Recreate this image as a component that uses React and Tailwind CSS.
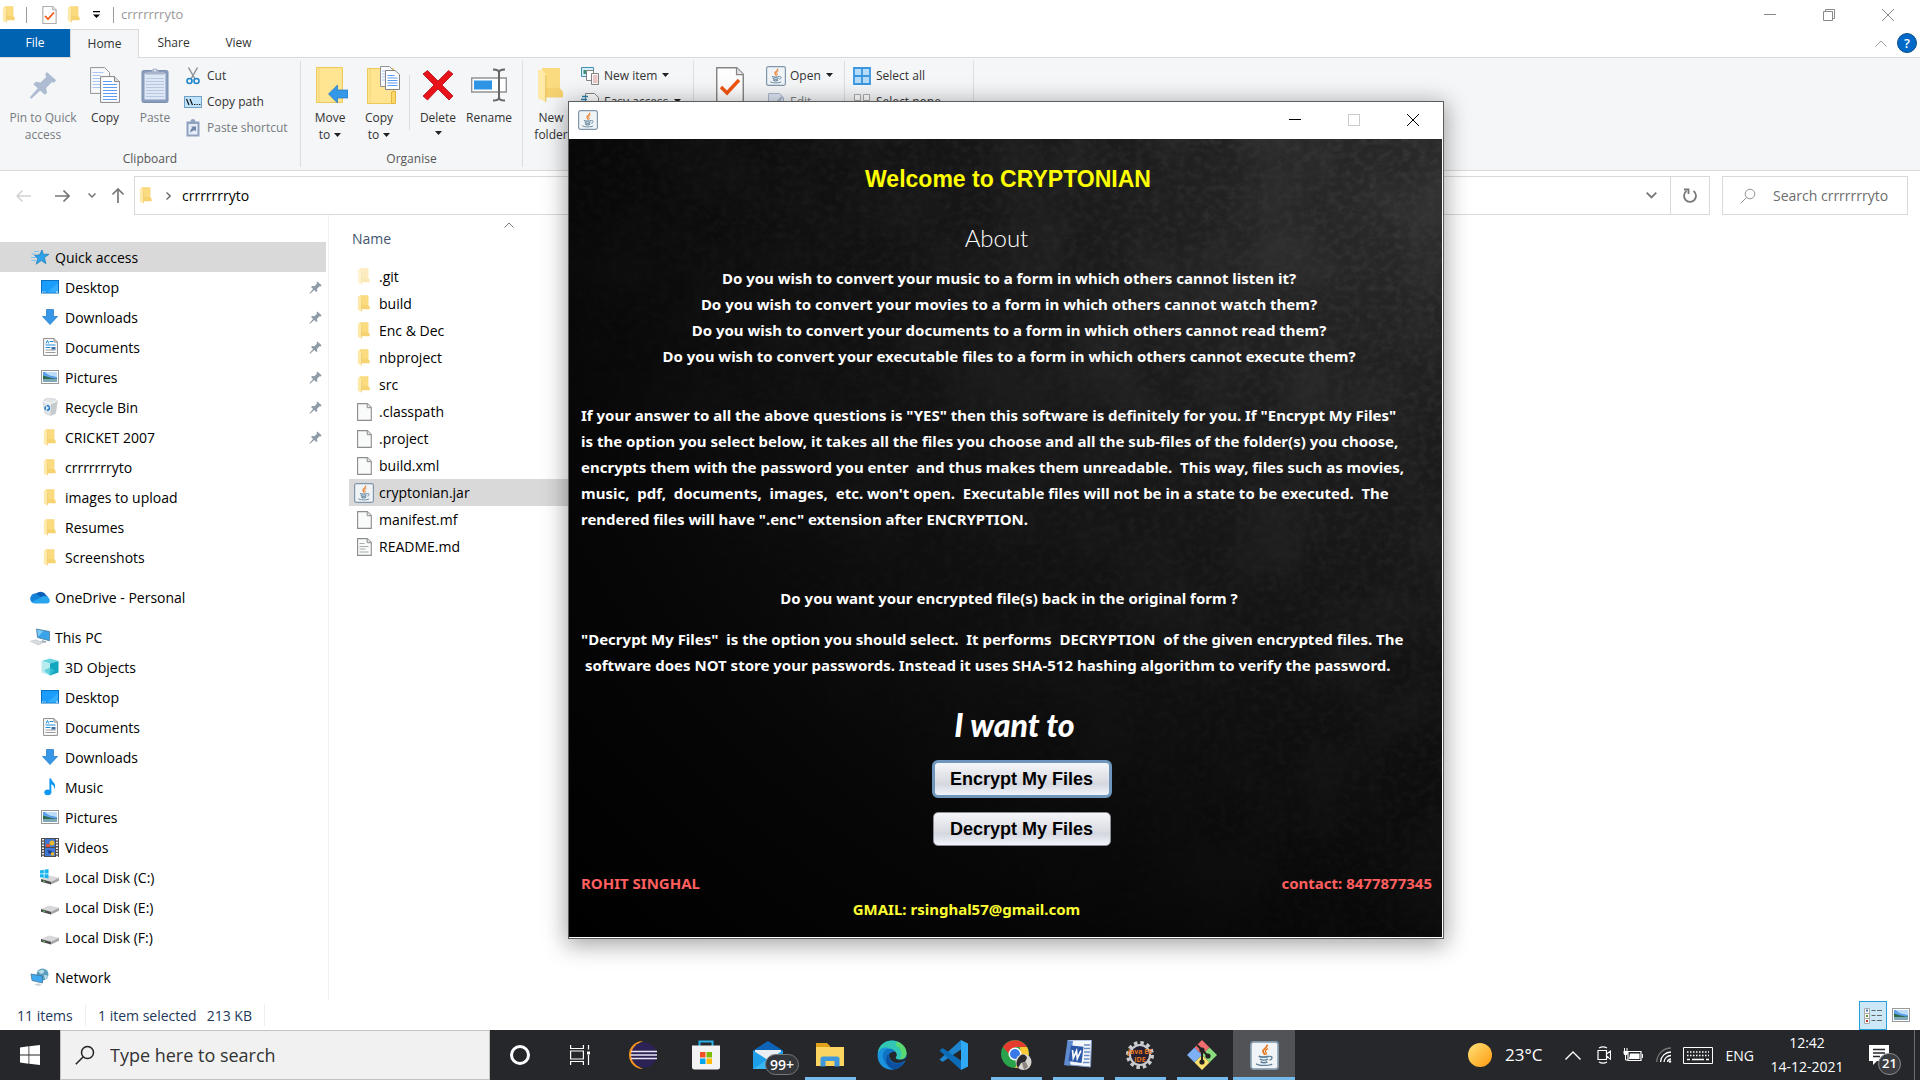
import React from "react";

/* ---------- small drawings ---------- */

function Folder({ className = "w-4 h-5", faded = false }) {
  return (
    <svg viewBox="0 0 14 18" className={className} opacity={faded ? 0.5 : 1} aria-hidden="true">
      <path d="M2.5 .5h9v10.3l1.5 1.4v3H2.5z" fill="#f6d271" />
      <path d="M2.5 .5h9v10h-9z" fill="#fadb80" />
      <path d="M.5 1.2l2.5.6 1.4 1.8V17.5L.5 15.6z" fill="#ffe9a8" />
      <path d="M4.4 4v13.5" stroke="#e9bf57" strokeWidth=".5" />
    </svg>
  );
}

function Java({ className = "w-5 h-5" }) {
  return (
    <svg viewBox="0 0 20 20" className={className} fill="none" aria-hidden="true">
      <rect x=".6" y=".6" width="18.8" height="18.8" rx="1.8" fill="#f1f4f7" stroke="#8097ab" strokeWidth="1.2" />
      <path d="M11.6 2.6c1.2 2-3.4 2.9-2.6 4.9.3.8 1.3 1 .9 2.2" stroke="#e9771e" strokeWidth="1.2" />
      <path d="M12.5 5.2c-1.9.8-2.4 1.7-1.4 2.8.4.6 0 1-.3 1.6" stroke="#e9771e" strokeWidth=".9" />
      <path d="M6 10.5c1.5.8 5.400.8 7 0M6.800 12.500c1.500.8 4.200.8 5.600 0M7.300 14.300c1.200.7 3.500.7 4.700 0" stroke="#5b7f99" strokeWidth="1.100" />
      <path d="M13.300 10.700c2.600-.7 2.400 2.100.1 2.500M4.300 15.600c1 1.600 9.300 1.700 11 .2" stroke="#5b7f99" strokeWidth=".9" />
    </svg>
  );
}

function Pin({ className = "w-3 h-3", color = "#8f9ba6" }) {
  return (
    <svg viewBox="0 0 16 16" className={className} aria-hidden="true">
      <path d="M10.200.5l5.300 4.800-1.200 1.400-1.300-.3-3.200 3.300.5 2.800-1.300 1.100-2.600-2.400-5 4.600-.9-.8 4.500-5.100-2.500-2.400 1.300-1.300 2.800.4 3.200-3.200-.5-1.500z" fill={color} />
    </svg>
  );
}

function Page({ className = "w-4 h-5", lines = false }) {
  return (
    <svg viewBox="0 0 15 18" className={className} aria-hidden="true">
      <path d="M.6.600h9.700l4 4v12.800H.6z" fill="#f9fafa" stroke="#8d8d8d" strokeWidth="1.100" />
      <path d="M10.200.6v4.100h4" fill="#e4e4e4" stroke="#8d8d8d" strokeWidth="1" />
      {lines && <path d="M2.500 5.500h5M2.500 8.500h9M2.500 11h6M2.500 14h9" stroke="#a7acac" />}
    </svg>
  );
}

function CheckPage({ className }) {
  return (
    <svg viewBox="0 0 28 36" className={className} aria-hidden="true">
      <path d="M.7.700h20l6.600 6.600v28H.7z" fill="#fdfdfd" stroke="#858585" strokeWidth="1.500" />
      <path d="M20.500.7v7h7" fill="#e3e3e3" stroke="#858585" strokeWidth="1.200" />
      <path d="M5 20l6 6 12-13" fill="none" stroke="#f0540f" strokeWidth="3.400" />
    </svg>
  );
}

function TextPages({ className }) {
  return (
    <svg viewBox="0 0 30 36" className={className} aria-hidden="true">
      <path d="M.6.600h14l5 5v20.800H.6z" fill="#f8f9fb" stroke="#929292" />
      <path d="M2.500 5.500h11M2.500 8.500h8M2.500 11.500h8M2.500 14.500h8M2.500 17.500h8M2.500 20.500h8" stroke="#a9c6f2" />
      <path d="M10.600 9.600h14l5 5v20.800h-19z" fill="#fdfdfe" stroke="#868686" />
      <path d="M24.500 9.600v5h5" fill="#ddd" stroke="#868686" />
      <path d="M13 14.500h9M13 17.500h14M13 20.500h14M13 23.500h14M13 26.500h14M13 29.500h14M13 32.500h14" stroke="#5e9bf2" />
    </svg>
  );
}

function Clip({ className }) {
  return (
    <svg viewBox="0 0 28 36" className={className} aria-hidden="true">
      <rect x="1" y="3.500" width="26" height="32" rx="1.500" fill="#8a9dbd" stroke="#7b8fb2" />
      <path d="M3.500 6.500h21v26h-21z" fill="#dde7f5" />
      <path d="M5 11.500h18M5 14.500h18M5 17.500h18M5 20.500h18M5 23.500h18M5 26.500h18M5 29.500h18" stroke="#b9c8e0" />
      <path d="M5 7.500V5h5.500a3.500 3.500 0 017 0H23v2.500z" fill="#a8b5ca" />
      <circle cx="14" cy="3.500" r="1" fill="#eef2f8" />
    </svg>
  );
}

function Desktop() {
  return (
    <svg viewBox="0 0 18 14" className="h-[14px] w-[18px]" aria-hidden="true">
      <rect x=".5" y=".5" width="17" height="12.500" fill="#1a9dfc" stroke="#0b70bd" />
      <path d="M6 12.500L17 3v9.500z" fill="#35adff" />
      <path d="M1 12h1.500M3.500 12h1M15 12h2" stroke="#fff" strokeWidth=".9" />
    </svg>
  );
}

function Down() {
  return (
    <svg viewBox="0 0 16 16" className="h-4 w-4" aria-hidden="true">
      <path d="M4.500.5h7v7h4L8 15.500.5 7.500h4z" fill="#3896e6" stroke="#2a7fc9" strokeWidth=".8" />
    </svg>
  );
}

function Docs() {
  return (
    <svg viewBox="0 0 15 18" className="h-[18px] w-[15px]" aria-hidden="true">
      <path d="M.6.600h10.400l3.400 3.400v13.400H.6z" fill="#fff" stroke="#8a8a8a" />
      <path d="M11 .6v3.400h3.400" fill="none" stroke="#8a8a8a" />
      <path d="M3 5.500l1.500-3 1.200 3M6.500 3.500H10M2.500 7h10M2.500 9.500h5" stroke="#1e8fd8" fill="none" />
      <path d="M2.500 12h10M2.500 14.500h10" stroke="#999" />
      <path d="M8.500 9h4v2.500h-4z" fill="#3f6fa5" />
    </svg>
  );
}

function Picture() {
  return (
    <svg viewBox="0 0 18 14" className="h-[14px] w-[18px]" aria-hidden="true">
      <rect x=".5" y=".5" width="17" height="13" fill="#fff" stroke="#999" />
      <path d="M2 2h14v10H2z" fill="#5ea2ee" />
      <path d="M4 2h12v5c-4-1-9-1-12-5z" fill="#bcdcf8" />
      <path d="M2 5.500c5 1 8 3 14 3V9H2z" fill="#2f6c4d" />
      <path d="M2 9h14v3H2z" fill="#7fa9b8" />
    </svg>
  );
}

function Bin() {
  return (
    <svg viewBox="0 0 16 18" className="h-[18px] w-4" aria-hidden="true">
      <path d="M1 3.500l2-2.500 4-.8 5 .6 3.500 2L13.500 15.500 8.500 17.500 3 15.200z" fill="#e3e6e8" stroke="#bfc5c9" strokeWidth=".6" />
      <path d="M9 5.500l6.300-2.400-1.800 12.400-5 2z" fill="#c5cacd" />
      <path d="M1 3.500L9 5.500l6.400-2.500" fill="none" stroke="#fff" strokeWidth=".8" />
      <circle cx="5.200" cy="10" r="2.200" fill="none" stroke="#1878cf" strokeWidth="1.500" strokeDasharray="3.400 1" />
    </svg>
  );
}

function Star() {
  return (
    <svg viewBox="0 0 20 18" className="h-[18px] w-5" aria-hidden="true">
      <path d="M12 2l1.200 4.200 5.800.1-4.600 3.300 1.500 6-4.700-3-5 3.600 1.600-5.800L4.500 7.400l5-.6z" fill="#2ea3ea" stroke="#1678b8" strokeWidth=".7" />
      <path d="M4 3.500h5M1.500 6h4M1 9.500h5M1.500 12.500h4.500" stroke="#7ec2ee" />
    </svg>
  );
}

function Cloud() {
  return (
    <svg viewBox="0 0 20 14" className="h-[14px] w-5" aria-hidden="true">
      <path d="M6 3.500A6 5 0 0116 5a4.500 4.500 0 01-1 8H5A4.500 4.500 0 016 3.500z" fill="#0c5fb8" />
      <path d="M.3 9.300A4.700 4.700 0 016 4l5 3-5 6H4.500A4.200 4.200 0 01.3 9.300z" fill="#1483d8" />
      <path d="M2 12L12 6.800a5 5 0 017.800 3.400A3.300 3.300 0 0116.500 13.500H4.500A4 4 0 012 12z" fill="#28a5ee" />
    </svg>
  );
}

function ThisPc() {
  return (
    <svg viewBox="0 0 20 18" className="h-[18px] w-5" aria-hidden="true">
      <path d="M6.500 1L19.500 3.500v9.300L7.500 9.500z" fill="#3aa3ea" stroke="#47728f" strokeWidth=".7" />
      <path d="M7.200 1.800l6 1.200-5 5.500z" fill="#7fcbf8" />
      <path d="M12 12.500l4 1.500M10 14h6" stroke="#8b9aa5" />
      <path d="M.5 13.200l5.500-1.400 7 3-5 2.200z" fill="#d8dde0" stroke="#b4bbc0" strokeWidth=".5" />
    </svg>
  );
}

function Cube() {
  return (
    <svg viewBox="0 0 18 18" className="h-[18px] w-[18px]" aria-hidden="true">
      <path d="M9 .5L17.500 3 9 5.500.5 3z" fill="#66d5df" />
      <path d="M.5 3L9 5.500v12L.5 14.500z" fill="#b7ebef" />
      <path d="M17.500 3L9 5.500v12l8.500-3z" fill="#12a6bf" />
      <path d="M3 12.500l6-3 5 3-5 5z" fill="#3cc4d3" opacity=".7" />
    </svg>
  );
}

function Music() {
  return (
    <svg viewBox="0 0 12 18" className="h-[18px] w-3" aria-hidden="true">
      <ellipse cx="3.800" cy="14.300" rx="3.500" ry="2.900" fill="#0e97f4" />
      <path d="M5.400.5h1.900c.3 3.500 4 4 3.800 7.500 0 1.500-.6 2.600-1.300 3.400.7-2.800-.4-4.400-2.500-5.100v8H5.400z" fill="#0e97f4" />
    </svg>
  );
}

function Videos() {
  return (
    <svg viewBox="0 0 18 19" className="h-[19px] w-[18px]" aria-hidden="true">
      <path d="M0 0h18v19H0z" fill="#4d4d4d" />
      <path d="M2 1v18M16 1v18" stroke="#eee" strokeWidth="2" strokeDasharray="1.500 1.300" />
      <path d="M4 1h10v8H4zM4 10h10v8H4z" fill="#4176d9" />
      <circle cx="11" cy="5" r="2.500" fill="#e9bb2b" />
      <path d="M5 6h4v3H5z" fill="#d9563d" />
      <path d="M6 12l5 1v3H8z" fill="#1f3f86" />
      <circle cx="11.500" cy="16" r="1.800" fill="#e9bb2b" />
    </svg>
  );
}

function Disk({ win = false }) {
  return (
    <svg viewBox="0 0 20 16" className="h-4 w-5" aria-hidden="true">
      <path d="M1 10l8-3.500 10 2.300-8 4z" fill="#d8d8da" />
      <path d="M1 10l10 2.800v2.700L1 12.700z" fill="#4b4b4b" />
      <path d="M19 8.800l-8 4v2.700l8-3.700z" fill="#a5a5a8" />
      <path d="M3 12l2 .6" stroke="#5dcb5d" />
      {win && <path d="M0 1.500l3.800-.7v3.700H0zM4.500.7L8.500 0v4.500h-4zM0 5.200h3.800v3.600L0 8.200zM4.500 5.200h4v4.200l-4-.6z" fill="#16b4ee" />}
    </svg>
  );
}

function Network() {
  return (
    <svg viewBox="0 0 20 18" className="h-[18px] w-5" aria-hidden="true">
      <circle cx="12.500" cy="6.500" r="6" fill="#5a9fc0" />
      <path d="M8 3.500c2-1.500 5-2.500 6-1s-1 3-3 3.500zM14 7c2 0 4 .5 4 1.500L15 12z" fill="#b6dbe6" />
      <path d="M1 6l11.500 2v7L2 12.500z" fill="#3fa8ee" stroke="#3c6d8e" strokeWidth=".7" />
      <path d="M4 16l5-.5 3 1.500-4 1z" fill="#c9d2d8" />
    </svg>
  );
}

const Caret = ({ className = "h-1 w-[7px]" }) => (
  <svg viewBox="0 0 7 4" className={className} aria-hidden="true"><path d="M0 0h7L3.500 4z" fill="#222" /></svg>
);

const Glass = ({ className, color, width = 1 }) => (
  <svg viewBox="0 0 20 20" className={className} fill="none" stroke={color} strokeWidth={width} aria-hidden="true">
    <circle cx="12.500" cy="7.500" r="6" /><path d="M8.300 11.800L.8 19.200" />
  </svg>
);

const Cross = ({ className, color }) => (
  <svg viewBox="0 0 12 12" className={className} stroke={color} aria-hidden="true"><path d="M0 0l12 12M12 0L0 12" /></svg>
);

/* ---------- explorer ---------- */

function BigButton({ icon, lines, width, muted, caret, below }) {
  return (
    <button className={`flex shrink-0 flex-col items-center ${width} ${muted ? "text-[#777b80]" : "text-[#333]"}`}>
      <span className="mb-[5px] flex h-[38px] items-center justify-center">{icon}</span>
      {lines.map((t, i) => (
        <span key={t} className="flex items-center gap-1 whitespace-nowrap leading-[17px]">
          {t}
          {caret && i === lines.length - 1 && <Caret />}
        </span>
      ))}
      {below && <span className="flex h-[14px] items-center"><Caret /></span>}
    </button>
  );
}

function SmallButton({ icon, label, muted, caret }) {
  return (
    <button className={`flex h-[26px] items-center gap-1 whitespace-nowrap ${muted ? "text-[#777b80]" : "text-[#333]"}`}>
      <span className="flex w-5 items-center justify-center">{icon}</span>
      {label}
      {caret && <span className="mb-[2px] ml-px"><Caret /></span>}
    </button>
  );
}

function Group({ width, label, children }) {
  return (
    <section className={`my-[3px] flex shrink-0 flex-col border-r border-[#dcdde0] ${width}`}>
      <div className="flex h-[92px] items-start">{children}</div>
      <div className="text-center leading-[16px] text-[#555]">{label}</div>
    </section>
  );
}

function Ribbon() {
  return (
    <div className="flex h-[114px] shrink-0 overflow-hidden border-y border-[#d9dadb] bg-[#f4f6f8] text-[12px]">
      <Group width="w-[301px]" label="Clipboard">
        <div className="flex pt-[5px] pl-1">
          <BigButton width="w-[78px]" muted lines={["Pin to Quick", "access"]} icon={<Pin className="h-7 w-7" color="#aebcd2" />} />
          <BigButton width="w-[46px]" lines={["Copy"]} icon={<TextPages className="h-9 w-[30px]" />} />
          <BigButton width="w-[54px]" muted lines={["Paste"]} icon={<Clip className="h-9 w-7" />} />
        </div>
        <div className="pt-[2px] pl-px">
          <SmallButton
            label="Cut"
            icon={
              <svg viewBox="0 0 14 18" className="h-[18px] w-[14px]" fill="none" aria-hidden="true">
                <path d="M2.500.5L9 12M11.500.5L5 12" stroke="#8d9499" strokeWidth="1.500" />
                <circle cx="3.500" cy="14" r="2.500" stroke="#1f86c9" strokeWidth="1.600" /><circle cx="10.500" cy="14" r="2.500" stroke="#1f86c9" strokeWidth="1.600" />
              </svg>
            }
          />
          <SmallButton
            label="Copy path"
            icon={
              <svg viewBox="0 0 18 12" className="h-3 w-[18px]" aria-hidden="true">
                <rect x=".5" y=".5" width="17" height="11" fill="#bfe3fb" stroke="#6f9fc2" />
                <path d="M2.500 3l2.500 6M6 3l2.500 6M10 8.500h1.300M12.500 8.500h1.300M15 8.500h1.300" stroke="#111" strokeWidth="1.200" />
              </svg>
            }
          />
          <SmallButton
            muted
            label="Paste shortcut"
            icon={
              <svg viewBox="0 0 14 18" className="h-[18px] w-[14px]" aria-hidden="true">
                <path d="M.5 2.500h4a2.500 2.500 0 015 0h4v15H.5z" fill="#8fa1bf" />
                <path d="M2.500 5h9v10.500h-9z" fill="#e6edf7" />
                <path d="M4 13.500l1-3.500 1.500-1L5 7.500h5v5L8.500 11z" fill="#6e84a8" />
              </svg>
            }
          />
        </div>
      </Group>
      <Group width="w-[222px]" label="Organise">
        <div className="flex pt-[5px] pl-[6px]">
          <BigButton width="w-[46px]" caret lines={["Move", "to"]} icon={
            <svg viewBox="0 0 32 36" className="ml-1 h-9 w-8" aria-hidden="true">
              <path d="M.5.5h26v35H.5z" fill="#ffe491" stroke="#ecc95a" /><path d="M3 1v34" stroke="#f3d676" />
              <path d="M12.500 27l9-9v5H32v8H21.500v5z" fill="#3497e8" stroke="#2479c4" strokeWidth=".7" />
            </svg>
          } />
          <BigButton width="w-[52px]" caret lines={["Copy", "to"]} icon={
            <svg viewBox="0 0 33 38" className="ml-2 h-[38px] w-[33px]" aria-hidden="true">
              <path d="M.5 2.500h26v35H.5z" fill="#ffe491" stroke="#ecc95a" /><path d="M3 3v34" stroke="#f3d676" />
              <path d="M24.500 37.500V26l4-1v12.500z" fill="#ffd968" stroke="#e3b640" />
              <path d="M13.500.5h9l3 3v17h-12z" fill="#f8fafc" stroke="#929292" /><path d="M15 5h4M15 8h4M15 11h4M15 14h4" stroke="#a9c6f2" />
              <path d="M18.500 4.500h9.500l4.500 4v15h-14z" fill="#fff" stroke="#858585" />
              <path d="M20.500 9.500h7M20.500 12h10M20.500 14.500h10M20.500 17h10M20.500 19.500h10" stroke="#5e9bf2" />
            </svg>
          } />
          <div className="mt-[9px] mr-[3px] ml-1 h-[55px] w-px bg-[#dcdde0]" />
          <BigButton width="w-[50px]" below lines={["Delete"]} icon={
            <svg viewBox="0 0 32 32" className="h-8 w-8" aria-hidden="true">
              <path d="M1 5l4.500-3.500L16 12 26.500 1.500 31 5 20 16l11 11-4 4L16 20 5.500 31 1 27l11-11z" fill="#e8121b" stroke="#b10c14" strokeWidth=".8" />
            </svg>
          } />
          <BigButton width="w-[52px]" lines={["Rename"]} icon={
            <svg viewBox="0 0 36 34" className="h-[34px] w-9" fill="none" aria-hidden="true">
              <path d="M.7 10h34.600v14H.7z" fill="#fff" stroke="#929292" strokeWidth="1.400" />
              <path d="M3 12.500h18v9H3z" fill="#2e94e6" />
              <path d="M22 1.500c4 0 6 .5 6 3v25c0 2.500-2 3-6 3M34 1.500c-4 0-6 .5-6 3v25c0 2.500 2 3 6 3" stroke="#666" strokeWidth="2" />
            </svg>
          } />
        </div>
      </Group>
      <Group width="w-[171px]" label="New">
        <div className="flex pt-[5px] pl-1">
          <BigButton width="w-[48px]" lines={["New", "folder"]} icon={<Folder className="h-9 w-7" />} />
        </div>
        <div className="pt-[2px] pl-[5px]">
          <SmallButton caret label="New item" icon={
            <svg viewBox="0 0 18 18" className="h-[18px] w-[18px]" aria-hidden="true">
              <path d="M.5.5h12v9H.5z" fill="#d7eefa" stroke="#3f8fae" /><path d="M2.500 3h3v4h-3z" fill="#3f8f7a" />
              <path d="M5.500 3.500h7v10h-7z" fill="#fff" stroke="#858585" /><path d="M10.500 6.500h7v11h-7z" fill="#f7f7f7" stroke="#858585" />
              <path d="M12 9h4.500M12 11h4.500M12 13h4.500M12 15h4.500" stroke="#d99" />
            </svg>
          } />
          <SmallButton caret label="Easy access" icon={
            <svg viewBox="0 0 18 18" className="h-[18px] w-[18px]" aria-hidden="true">
              <path d="M4.500.5h9l4 4v13h-13z" fill="#fff" stroke="#858585" /><path d="M1 3.500h6M0 6.500h6M0 9.500h5" stroke="#2a7fb5" strokeWidth="1.400" />
            </svg>
          } />
        </div>
      </Group>
      <Group width="w-[151px]" label="Open">
        <div className="flex pt-[5px] pl-[11px]">
          <BigButton width="w-[50px]" lines={["Properties"]} icon={<CheckPage className="h-9 w-7" />} />
        </div>
        <div className="pt-[2px] pl-[11px]">
          <SmallButton caret label="Open" icon={<Java />} />
          <SmallButton muted label="Edit" icon={
            <svg viewBox="0 0 16 18" className="h-[18px] w-4" aria-hidden="true">
              <path d="M.5.500h11l4 4v13H.5z" fill="#dfe6f2" stroke="#a9b7cf" /><path d="M6 13l8-9" stroke="#a9b7cf" strokeWidth="2.500" />
            </svg>
          } />
        </div>
      </Group>
      <Group width="w-[129px]" label="Select">
        <div className="pt-[2px] pl-[7px]">
          <SmallButton label="Select all" icon={
            <svg viewBox="0 0 18 18" className="h-[18px] w-[18px]" aria-hidden="true">
              <path d="M1 1h16v16H1zM9 1v16M1 9h16" fill="#b5dcfb" stroke="#3a96df" strokeWidth="1.800" />
            </svg>
          } />
          <SmallButton label="Select none" icon={
            <svg viewBox="0 0 18 18" className="h-[18px] w-[18px]" aria-hidden="true">
              <path d="M1.500 1.500h6v6h-6zM10.500 1.500h6v6h-6zM1.500 10.500h6v6h-6zM10.500 10.500h6v6h-6z" fill="#fff" stroke="#aaa" />
            </svg>
          } />
        </div>
      </Group>
    </div>
  );
}

function ExplorerTop() {
  return (
    <header className="shrink-0">
      <div className="flex h-[29px] items-center">
        <div className="flex flex-1 items-center pl-[2px]">
          <Folder className="h-[17px] w-[14px]" />
          <span className="ml-[10px] h-4 w-px bg-[#9a9a9a]" />
          <CheckPage className="ml-[15px] h-[18px] w-[15px]" />
          <Folder className="ml-[10px] h-[17px] w-[14px]" />
          <svg viewBox="0 0 7 7" className="ml-3 h-[7px] w-[7px]" aria-hidden="true"><path d="M0 0h7v1.300H0zM0 3.500h7L3.500 7z" /></svg>
          <span className="ml-[13px] h-4 w-px bg-[#9a9a9a]" />
          <span className="ml-[7px] text-[13px] text-[#999]">crrrrrrryto</span>
        </div>
        <div className="flex items-center gap-[47px] pr-[26px]">
          <button aria-label="Minimise" className="h-px w-3 bg-[#888]" />
          <button aria-label="Restore">
            <svg viewBox="0 0 12 12" className="h-3 w-3" fill="none" stroke="#888" aria-hidden="true"><path d="M.5 2.500h9v9h-9zM2.500 2.500v-2h9v9h-2" /></svg>
          </button>
          <button aria-label="Close"><Cross className="h-3 w-3" color="#888" /></button>
        </div>
      </div>
      <nav className="flex h-7 items-center text-[12px] text-[#333]">
        <button className="h-7 w-[70px] bg-[#0063b1] text-white">File</button>
        <button className="relative z-10 h-[29px] w-[69px] self-start border border-b-0 border-[#d9dadb] bg-[#f4f6f8]">Home</button>
        <button className="w-[69px]">Share</button>
        <button className="w-[61px]">View</button>
        <span className="flex-1" />
        <button aria-label="Collapse ribbon" className="mr-[10px]">
          <svg viewBox="0 0 12 7" className="h-[7px] w-3" fill="none" stroke="#999" aria-hidden="true"><path d="M.5 6.500L6 1l5.500 5.500" /></svg>
        </button>
        <button aria-label="Help" className="mr-[3px] h-5 w-5 rounded-full border border-[#0b4f86] bg-[#0269c8] text-[13px] leading-4 font-semibold text-white">?</button>
      </nav>
    </header>
  );
}

function AddressRow() {
  return (
    <div className="flex shrink-0 items-center pt-[5px] pr-3">
      <div className="flex w-[134px] items-center pl-4">
        <button aria-label="Back">
          <svg viewBox="0 0 15 12" className="h-3 w-[15px]" fill="none" stroke="#d2d2d2" strokeWidth="1.500" aria-hidden="true"><path d="M15 6H1M6.500.5L1 6l5.500 5.500" /></svg>
        </button>
        <button aria-label="Forward" className="ml-6">
          <svg viewBox="0 0 15 12" className="h-3 w-[15px]" fill="none" stroke="#777" strokeWidth="1.700" aria-hidden="true"><path d="M0 6h14M8.500.5L14 6l-5.500 5.500" /></svg>
        </button>
        <button aria-label="Recent locations" className="ml-[18px]">
          <svg viewBox="0 0 8 5" className="h-[5px] w-2" fill="none" stroke="#777" strokeWidth="1.500" aria-hidden="true"><path d="M.5.5L4 4 7.500.5" /></svg>
        </button>
        <button aria-label="Up" className="ml-4">
          <svg viewBox="0 0 12 15" className="h-[15px] w-3" fill="none" stroke="#777" strokeWidth="1.700" aria-hidden="true"><path d="M6 15V1M.5 6.500L6 1l5.500 5.500" /></svg>
        </button>
      </div>
      <div className="flex h-[39px] flex-1 items-center border border-[#d9d9d9] bg-white pl-1">
        <Folder className="h-[17px] w-[14px]" />
        <svg viewBox="0 0 5 8" className="ml-[13px] h-2 w-[5px]" fill="none" stroke="#666" strokeWidth="1.300" aria-hidden="true"><path d="M.5.5L4.200 4 .5 7.500" /></svg>
        <button className="ml-[11px] text-[14px]">crrrrrrryto</button>
        <span className="flex-1" />
        <button aria-label="Previous locations" className="mr-[13px]">
          <svg viewBox="0 0 11 7" className="h-[7px] w-[11px]" fill="none" stroke="#777" strokeWidth="1.800" aria-hidden="true"><path d="M.7.700L5.500 5.500 10.300.7" /></svg>
        </button>
        <button aria-label="Refresh" className="flex h-full w-[39px] items-center justify-center border-l border-[#d9d9d9]">
          <svg viewBox="0 0 16 16" className="h-4 w-4" fill="none" stroke="#777" strokeWidth="1.800" aria-hidden="true"><path d="M11.500 3a6 6 0 11-7 0" /><path d="M2 1.500h4.500V6" /></svg>
        </button>
      </div>
      <label className="ml-3 flex h-[39px] w-[186px] items-center border border-[#d9d9d9] pl-[17px]">
        <Glass className="h-4 w-4" color="#777" />
        <input aria-label="Search folder" placeholder="Search crrrrrrryto" className="ml-[17px] w-[125px] bg-transparent text-[14px] outline-none placeholder:text-[#6d6d6d]" />
      </label>
    </div>
  );
}

const folderIcon = <Folder className="h-[17px] w-[14px]" />;
const TREE = [
  ["Quick access", <Star />, 1, false],
  ["Desktop", <Desktop />, 2, true],
  ["Downloads", <Down />, 2, true],
  ["Documents", <Docs />, 2, true],
  ["Pictures", <Picture />, 2, true],
  ["Recycle Bin", <Bin />, 2, true],
  ["CRICKET 2007", folderIcon, 2, true],
  ["crrrrrrryto", folderIcon, 2, false],
  ["images to upload", folderIcon, 2, false],
  ["Resumes", folderIcon, 2, false],
  ["Screenshots", folderIcon, 2, false],
  ["OneDrive - Personal", <Cloud />, 1, false],
  ["This PC", <ThisPc />, 1, false],
  ["3D Objects", <Cube />, 2, false],
  ["Desktop", <Desktop />, 2, false],
  ["Documents", <Docs />, 2, false],
  ["Downloads", <Down />, 2, false],
  ["Music", <Music />, 2, false],
  ["Pictures", <Picture />, 2, false],
  ["Videos", <Videos />, 2, false],
  ["Local Disk (C:)", <Disk win />, 2, false],
  ["Local Disk (E:)", <Disk />, 2, false],
  ["Local Disk (F:)", <Disk />, 2, false],
  ["Network", <Network />, 1, false],
];

function Sidebar() {
  return (
    <nav className="w-[329px] shrink-0 border-r border-[#f0f0f0] pt-[27px] pr-[2px] text-[14px]">
      <ul>
        {TREE.map(([label, icon, level, pinned], i) => (
          <li key={i} className={level === 1 && i > 0 ? "mt-[10px]" : ""}>
            <button
              className={`flex h-[30px] w-full items-center gap-[5px] pr-1 ${level === 1 ? "pl-[30px]" : "pl-10"} ${i === 0 ? "bg-[#d9d9d9]" : ""}`}
            >
              <span className="flex w-5 shrink-0 items-center justify-center">{icon}</span>
              <span className="flex-1 text-left">{label}</span>
              {pinned && <Pin className="h-[13px] w-[13px]" />}
            </button>
          </li>
        ))}
      </ul>
    </nav>
  );
}

const page = <Page className="h-[18px] w-[15px]" />;
const FILES = [
  [".git", <Folder className="h-[17px] w-[14px]" faded />],
  ["build", folderIcon],
  ["Enc & Dec", folderIcon],
  ["nbproject", folderIcon],
  ["src", folderIcon],
  [".classpath", page],
  [".project", page],
  ["build.xml", page],
  ["cryptonian.jar", <Java />],
  ["manifest.mf", page],
  ["README.md", <Page className="h-[18px] w-[15px]" lines />],
];

function FileList() {
  return (
    <main className="flex-1 pt-[7px] pl-5">
      <table className="w-[316px] border-collapse text-[14px]">
        <thead>
          <tr>
            <th className="pb-[13px] pl-[3px] text-left font-normal text-[#44546f]">
              <svg viewBox="0 0 10 6" className="mx-auto h-[6px] w-[10px]" fill="none" stroke="#777" aria-hidden="true"><path d="M.5 5.500L5 1l4.500 4.500" /></svg>
              <span className="block leading-[22px]">Name</span>
            </th>
          </tr>
        </thead>
        <tbody>
          {FILES.map(([name, icon]) => (
            <tr key={name} className={name === "cryptonian.jar" ? "bg-[#d9d9d9]" : ""}>
              <td className="h-[27px] p-0 pl-[5px]">
                <span className="flex items-center gap-[5px]">
                  <span className="flex w-5 items-center justify-center">{icon}</span>
                  {name}
                </span>
              </td>
            </tr>
          ))}
        </tbody>
      </table>
    </main>
  );
}

function StatusBar() {
  return (
    <footer className="flex h-[30px] shrink-0 items-center pr-[10px] text-[14px] text-[#1e395b]">
      <span className="w-[67px] pl-[17px] whitespace-nowrap">11 items</span>
      <span className="ml-[18px] h-[22px] w-px bg-[#eee]" />
      <span className="ml-3 whitespace-nowrap">1 item selected</span>
      <span className="ml-[10px] whitespace-nowrap">213 KB</span>
      <span className="ml-3 h-[22px] w-px bg-[#eee]" />
      <span className="flex-1" />
      <button aria-label="Details view" className="flex h-[29px] w-7 items-center justify-center self-end border border-[#26a0da] bg-[#cce8f6]">
        <svg viewBox="0 0 18 16" className="h-4 w-[18px]" fill="none" aria-hidden="true">
          <path d="M.5.5h5v15h-5zM.5 5.500h5M.5 10.500h5" fill="#fff" stroke="#aaa" />
          <path d="M2 2.500h2" stroke="#3a77c2" strokeWidth="2" /><path d="M2 8h2" stroke="#6a8f33" strokeWidth="2" /><path d="M2 13h2" stroke="#c23a2b" strokeWidth="2" />
          <path d="M7.500 2.500h4M13 2.500h5M7.500 7.500h4M13 7.500h5M7.500 12.500h4M13 12.500h5" stroke="#666" />
        </svg>
      </button>
      <button aria-label="Thumbnail view" className="ml-[5px]"><Picture /></button>
    </footer>
  );
}

/* ---------- java dialog ---------- */

function Dialog() {
  return (
    <section
      role="dialog"
      aria-label="Cryptonian"
      className="absolute top-[101px] left-[568px] z-20 w-[876px] border border-[#5c5c5c] bg-white pr-px pb-px shadow-[0_4px_22px_2px_rgba(0,0,0,0.36)]"
    >
      <div className="flex h-[37px] items-center pr-[23px] pb-[2px] pl-[9px]">
        <Java className="h-5 w-5" />
        <span className="flex-1" />
        <div className="flex items-center gap-[47px]">
          <button aria-label="Minimise dialog" className="h-px w-3 bg-black" />
          <button aria-label="Maximise dialog" className="h-3 w-3 border border-[#ccc]" />
          <button aria-label="Close dialog"><Cross className="h-3 w-3" color="#000" /></button>
        </div>
      </div>
      <div className="relative overflow-hidden bg-[radial-gradient(ellipse_at_94%_8%,#2a2a2a_0%,#1c1c1c_24%,#101010_50%,#060606_75%,#000000_100%)] font-['Noto_Sans',sans-serif] text-[15px] leading-[26px] font-bold text-white">
        <svg className="absolute inset-0 h-full w-full opacity-15 [mask-image:linear-gradient(to_top_right,transparent_25%,black)]" aria-hidden="true">
          <filter id="grain"><feTurbulence type="fractalNoise" baseFrequency="0.12 0.15" numOctaves="4" seed="4" /><feColorMatrix values="0 0 0 0 .45  0 0 0 0 .45  0 0 0 0 .45  1.600 0 0 0 -.65" /></filter>
          <filter id="clouds"><feTurbulence type="fractalNoise" baseFrequency="0.012 0.01" numOctaves="4" seed="9" /><feColorMatrix values="0 0 0 0 .45  0 0 0 0 .45  0 0 0 0 .45  1.600 0 0 0 -.65" /></filter>
          <rect width="100%" height="100%" filter="url(#grain)" />
          <rect width="100%" height="100%" filter="url(#clouds)" />
        </svg>
        <div className="relative pt-[27px] pr-[10px] pb-[15px] pl-3">
          <h1 className="pl-[3px] text-center font-['Liberation_Sans',Arial,sans-serif] text-[23px] text-[#ffff00]">Welcome to CRYPTONIAN</h1>
          <h2 className="mt-8 pr-5 text-center font-[Lato,sans-serif] text-[24px] leading-7 font-light">About</h2>
          <div className="mt-[13px] pl-[5px] text-center whitespace-nowrap">
            <p>Do you wish to convert your music to a form in which others cannot listen it?</p>
            <p>Do you wish to convert your movies to a form in which others cannot watch them?</p>
            <p>Do you wish to convert your documents to a form in which others cannot read them?</p>
            <p>Do you wish to convert your executable files to a form in which others cannot execute them?</p>
          </div>
          <p className="mt-[33px] whitespace-pre">
            {`If your answer to all the above questions is "YES" then this software is definitely for you. If "Encrypt My Files"
is the option you select below, it takes all the files you choose and all the sub-files of the folder(s) you choose,
encrypts them with the password you enter  and thus makes them unreadable.  This way, files such as movies,
music,  pdf,  documents,  images,  etc. won't open.  Executable files will not be in a state to be executed.  The
rendered files will have ".enc" extension after ENCRYPTION.`}
          </p>
          <p className="mt-[53px] pl-[5px] text-center">Do you want your encrypted file(s) back in the original form ?</p>
          <p className="mt-[15px] whitespace-pre">
            {`"Decrypt My Files"  is the option you should select.  It performs  DECRYPTION  of the given encrypted files. The
 software does NOT store your passwords. Instead it uses SHA-512 hashing algorithm to verify the password.`}
          </p>
          <h2 className="mt-[31px] pl-4 text-center font-[Lato,sans-serif] text-[32px] leading-8 font-black italic">I want to</h2>
          <div className="mt-[19px] flex flex-col items-center gap-[14px] pl-[30px] font-['Liberation_Sans',Arial,sans-serif] text-[18px] text-black">
            <button className="h-[38px] w-[180px] rounded-[6px] border-[3px] border-[#6f97be] bg-[linear-gradient(#f5f6f9,#dcdde4_55%,#d5d7e0_65%,#f2f4fa)] leading-5">Encrypt My Files</button>
            <button className="h-[34px] w-[178px] rounded-[5px] border border-[#8c8f98] bg-[linear-gradient(#f5f6f9,#dcdde4_55%,#d5d7e0_65%,#f2f4fa)] leading-5">Decrypt My Files</button>
          </div>
          <div className="mt-6 flex justify-between text-[#ff5f5f]">
            <span>ROHIT SINGHAL</span>
            <span>contact: 8477877345</span>
          </div>
          <p className="pr-20 text-center text-[#ffff33]">GMAIL: rsinghal57@gmail.com</p>
        </div>
      </div>
    </section>
  );
}

/* ---------- taskbar ---------- */

function Slot({ label, open, active, children }) {
  return (
    <button aria-label={label} className={`relative flex h-full w-[62px] shrink-0 items-center justify-center ${active ? "bg-[#515356]" : ""}`}>
      {children}
      {(open || active) && <span className={`absolute bottom-0 h-[3px] bg-[#76b9ed] ${active ? "w-full" : "w-[51px]"}`} />}
    </button>
  );
}

function Taskbar() {
  return (
    <footer className="flex h-[50px] shrink-0 items-center bg-[#25272b] text-white">
      <button aria-label="Start" className="flex h-full w-[60px] items-center justify-center">
        <svg viewBox="0 0 20 20" className="h-5 w-5" fill="#fff" aria-hidden="true"><path d="M0 2.500l8.500-1.200v8.300H0zM9.300 1.200L20 0v9.600H9.300zM0 10.400h8.500v8.300L0 17.500zM9.300 10.400H20V20L9.300 18.800z" /></svg>
      </button>
      <label className="flex h-full w-[430px] items-center border border-[#c1c1c1] bg-[#f1f1f1] pl-[14px] text-[#333]">
        <Glass className="h-5 w-5" color="#222" width={1.5} />
        <input aria-label="Type here to search" placeholder="Type here to search" className="ml-[15px] flex-1 bg-transparent text-[18px] outline-none placeholder:text-[#333]" />
      </label>
      <button aria-label="Cortana" className="flex w-[60px] justify-center"><span className="h-5 w-5 rounded-full border-[3px] border-white" /></button>
      <button aria-label="Task view" className="mr-[3px] flex w-[60px] justify-center">
        <svg viewBox="0 0 20 20" className="h-5 w-5" fill="none" stroke="#fff" strokeWidth="1.200" aria-hidden="true">
          <path d="M.6 0v3.500h12.800V0M.6 20v-3.500h12.800V20M.6 6h12.800v8H.6zM18.500 0v4.500M18.500 10v10" /><path d="M17 6.500h3v3h-3z" fill="#fff" stroke="none" />
        </svg>
      </button>
      <Slot label="Eclipse">
        <svg viewBox="0 0 30 28" className="mr-1 h-7 w-[30px]" aria-hidden="true">
          <path d="M16 0a14 14 0 000 28 15 15 0 010-28z" fill="#f7941e" />
          <circle cx="17" cy="14" r="12.800" fill="#2c2255" />
          <path d="M4 10.500h26M3.500 14h27M4 17.500h26" stroke="#e8e6f3" strokeWidth="1.700" />
        </svg>
      </Slot>
      <Slot label="Microsoft Store">
        <svg viewBox="0 0 30 30" className="h-[30px] w-[30px]" aria-hidden="true">
          <path d="M8.500 7V1.500h13V7" fill="none" stroke="#29b0e8" strokeWidth="2" />
          <path d="M1 5.500h28V27a2.500 2.500 0 01-2.500 2.500h-23A2.500 2.500 0 011 27z" fill="#f3f3f3" />
          <path d="M9 12h5.500v5.500H9z" fill="#f25022" /><path d="M15.500 12H21v5.500h-5.500z" fill="#7fba00" /><path d="M9 18.500h5.500V24H9z" fill="#00a4ef" /><path d="M15.500 18.500H21V24h-5.500z" fill="#ffb900" />
        </svg>
      </Slot>
      <Slot label="Mail, 99+ new">
        <svg viewBox="0 0 30 28" className="h-7 w-[30px]" aria-hidden="true">
          <path d="M0 9.500L15 0l15 9.500V20H0z" fill="#0d63b5" /><path d="M2 9h26v8L15 22 2 17z" fill="#e9eef3" />
          <path d="M0 9.500L15 19l15-9.500V28H0z" fill="#1c9ee8" /><path d="M0 28l15-10 15 10z" fill="#39b5f4" />
        </svg>
        <span className="absolute top-6 right-0 flex h-[21px] items-center rounded-full border border-[#777] bg-[#33363a] px-1 text-[14px] font-semibold">99+</span>
      </Slot>
      <Slot label="File Explorer" open>
        <svg viewBox="0 0 28 24" className="h-6 w-7" aria-hidden="true">
          <path d="M0 0h11l3 3v6H0z" fill="#e0a11b" /><path d="M0 4h28v19H0z" fill="#fcd462" />
          <path d="M4.500 23.500V16a2.500 2.500 0 012.500-2.500h14a2.500 2.500 0 012.500 2.500v7.500h-5V18h-9v5.500z" fill="#3f97dc" />
        </svg>
      </Slot>
      <Slot label="Edge">
        <svg viewBox="0 0 30 30" className="h-[30px] w-[30px]" aria-hidden="true">
          <circle cx="15" cy="15" r="14.500" fill="#1173c4" />
          <path d="M1 12C2 5 8 .5 15 .5S29.500 6 29.500 13c0 4.500-3.500 6.500-7 6.500-3 0-4.500-1.200-3.500-2.500C21 13 17 8.500 12 8.500 6 8.500 2 11 1 15z" fill="#32c6b4" />
          <path d="M1 14C2 8 8 6.500 12 8c-5 1.500-8 7-5 12.500C9 25 13 28.500 17 29.300 8 31-.5 24 1 14z" fill="#1b93dd" />
          <path d="M12 13c-2 5 1.500 10.500 8 10.500 3 0 5-.8 7.500-2.300-3 6-8.500 8.300-11.500 8C9 27 7 18 12 13z" fill="#0c4f9e" />
          <path d="M20 1.500c6 2 9.500 6.500 9.500 11.500 0 4.500-3.500 6.500-7 6.500 4-5 2-12-4-14z" fill="#6bdd5a" opacity=".75" />
          <path d="M19 17c1.200-1.500 1-3-.5-5-3-.5-5 .5-6.300 2.500-.7 4 2.800 8.500 8.300 8.500 2.500 0 5.500-1 7.500-2.500l1 .5.500-4c-1.500 2-4 3-7 2.700-3-.2-4.500-1.200-3.500-2.700z" fill="#25272b" />
        </svg>
      </Slot>
      <Slot label="Visual Studio Code">
        <svg viewBox="0 0 30 30" className="h-[30px] w-[30px]" aria-hidden="true">
          <path d="M22 0l7 3.500v23L22 30z" fill="#2fa9f4" /><path d="M22 0v9.500L3.500 22 .5 19.500z" fill="#1e86cf" /><path d="M22 30v-9.500L3.500 8 .5 10.500z" fill="#0c6cb8" />
        </svg>
      </Slot>
      <Slot label="Chrome" open>
        <svg viewBox="0 0 32 32" className="h-8 w-8" aria-hidden="true">
          <circle cx="15" cy="15" r="14" fill="#2ba24c" /><path d="M2.900 8A14 14 0 0127 8H15l-6 7z" fill="#e33b2e" /><path d="M27 8A14 14 0 0115 29l6-11-1-10z" fill="#fcc934" />
          <circle cx="15" cy="15" r="6.500" fill="#fff" /><circle cx="15" cy="15" r="5" fill="#3878e8" />
          <circle cx="23.500" cy="23" r="8" fill="#d8d4d0" /><path d="M20 17c3-3 6-1 7 2l-2 4-4 1-3 5c-3-4-1-9 2-12z" fill="#2c2c30" /><path d="M22 24l4-1 2 5-4 3z" fill="#8b857f" />
        </svg>
      </Slot>
      <Slot label="Word" open>
        <svg viewBox="0 0 28 30" className="h-[30px] w-7" aria-hidden="true">
          <path d="M4 0h23.500l-1 27L6 25z" fill="#f3f6fb" stroke="#7f9ccc" />
          <path d="M20 5h6M20 8.500h6M20 12h6M20 15.500h5.500M20 19h5.500M19 22.500h6.500" stroke="#6a8cc4" strokeWidth="1.300" />
          <path d="M3.500.5L9 1 5.500 26 0 25z" fill="#5f8bd0" />
          <path d="M7 5.500l12.500 1.200-2 16.300L4.500 21z" fill="#2b57a7" />
          <path d="M8.500 10l.8 8L12.500 11l.8 7.500L17 10.500" fill="none" stroke="#fff" strokeWidth="1.700" />
        </svg>
      </Slot>
      <Slot label="Java EE IDE" open>
        <svg viewBox="0 0 30 30" className="h-[30px] w-[30px]" aria-hidden="true">
          <circle cx="15" cy="15" r="12" fill="none" stroke="#c9cbcd" strokeWidth="4" strokeDasharray="3.400 2.880" />
          <circle cx="15" cy="15" r="10" fill="#241f33" stroke="#c9cbcd" strokeWidth="2" />
          <text x="15" y="14" textAnchor="middle" fontSize="7" fontWeight="700" fill="#e5761b">Java EE</text><text x="15" y="22" textAnchor="middle" fontSize="7" fontWeight="700" fill="#e5761b">IDE</text>
        </svg>
      </Slot>
      <Slot label="Git" open>
        <svg viewBox="0 0 30 30" className="h-[30px] w-[30px]" aria-hidden="true">
          <path d="M15 0l7.500 7.500L15 15 7.500 7.500z" fill="#f26d6d" /><path d="M7.500 7.500L15 15l-7.500 7.500L0 15z" fill="#7fb0f5" /><path d="M22.500 7.500L30 15l-7.500 7.500L15 15z" fill="#8bdc7c" /><path d="M15 15l7.500 7.500L15 30l-7.500-7.500z" fill="#fbe06b" />
          <path d="M10 5l5 5v12M15 10l6 6" stroke="#222" strokeWidth="2" fill="none" /><circle cx="15" cy="10" r="2.600" fill="#222" /><circle cx="15" cy="22" r="2.600" fill="#222" /><circle cx="21" cy="16" r="2.600" fill="#222" />
        </svg>
      </Slot>
      <Slot label="Cryptonian" active><Java className="h-[29px] w-[29px]" /></Slot>
      <span className="flex-1" />
      <button className="flex items-center gap-[13px] text-[17px]">
        <span className="h-6 w-6 rounded-full bg-[linear-gradient(135deg,#ffe27a,#ff9a0d)]" />23°C
      </button>
      <button aria-label="Show hidden icons" className="ml-[22px]">
        <svg viewBox="0 0 16 9" className="h-[9px] w-4" fill="none" stroke="#fff" strokeWidth="1.400" aria-hidden="true"><path d="M.5 8.500L8 1l7.500 7.500" /></svg>
      </button>
      <svg viewBox="0 0 14 18" className="ml-4 h-[18px] w-[14px]" fill="none" stroke="#fff" strokeWidth="1.200" aria-label="Meet now">
        <path d="M1 4.500h8.500v9H1zM9.500 8L13.500 5v8L9.500 10M2 2C5 .3 7 .3 10 2M2 16c3 1.700 5 1.700 8 0" />
      </svg>
      <svg viewBox="0 0 20 14" className="ml-3 h-[14px] w-5" fill="none" stroke="#fff" aria-label="Battery charging">
        <path d="M5 3.500h13v9H5z" strokeWidth="1.200" /><path d="M7 5.500h9.500v5.500H6z" fill="#fff" stroke="none" /><path d="M19.500 6v4M2.500 7v5H5M1.500 0v3M4 0v3" /><path d="M.5 3H5v2a2 2 0 01-4.500 0z" fill="#fff" stroke="none" />
      </svg>
      <svg viewBox="0 0 16 16" className="ml-[13px] h-4 w-4" fill="none" stroke="#fff" strokeWidth="1.300" aria-label="Wi-Fi">
        <path d="M.7 15A14.500 14.500 0 0115 1" stroke="#777" /><path d="M4.500 15A10.500 10.500 0 0115 5M8 15a7 7 0 017-6.500M11.500 15A3.500 3.500 0 0115 12" /><circle cx="14" cy="14.500" r="1.200" fill="#fff" stroke="none" />
      </svg>
      <svg viewBox="0 0 30 17" className="ml-[11px] h-[17px] w-[30px]" fill="none" stroke="#fff" aria-label="Touch keyboard">
        <path d="M.5.500h29v16H.5z" /><path d="M4 5h22M4 8.500h22" strokeWidth="1.500" strokeDasharray="1.500 1.500" /><path d="M4 12.500h3M9 12.500h12M23 12.500h3" strokeWidth="1.400" />
      </svg>
      <button className="ml-[13px] text-[14px]">ENG</button>
      <button className="ml-4 w-[74px] text-center text-[14px] leading-6 whitespace-nowrap">12:42<br />14-12-2021</button>
      <button aria-label="Notifications" className="relative mt-[10px] ml-[25px] h-[30px] w-8">
        <svg viewBox="0 0 20 20" className="absolute top-0 left-0 h-5 w-5" aria-hidden="true"><path d="M0 0h20v16H8l-4 4v-4H0z" fill="#fff" /><path d="M4 4.500h12M4 8h12M4 11.500h7" stroke="#25272b" strokeWidth="1.300" /></svg>
        <span className="absolute right-0 bottom-0 flex h-[22px] w-[23px] items-center justify-center rounded-full border border-[#888] bg-[#3b3d41] text-[13px] font-semibold">21</span>
      </button>
      <span className="mr-[5px] ml-[13px] h-full w-px bg-[#6a6c6f]" />
    </footer>
  );
}

export default function App() {
  return (
    <div className="relative flex min-h-screen flex-col bg-white font-['Open_Sans','Noto_Sans',sans-serif] text-black">
      <ExplorerTop />
      <Ribbon />
      <AddressRow />
      <div className="flex flex-1">
        <Sidebar />
        <FileList />
      </div>
      <StatusBar />
      <Dialog />
      <Taskbar />
    </div>
  );
}
